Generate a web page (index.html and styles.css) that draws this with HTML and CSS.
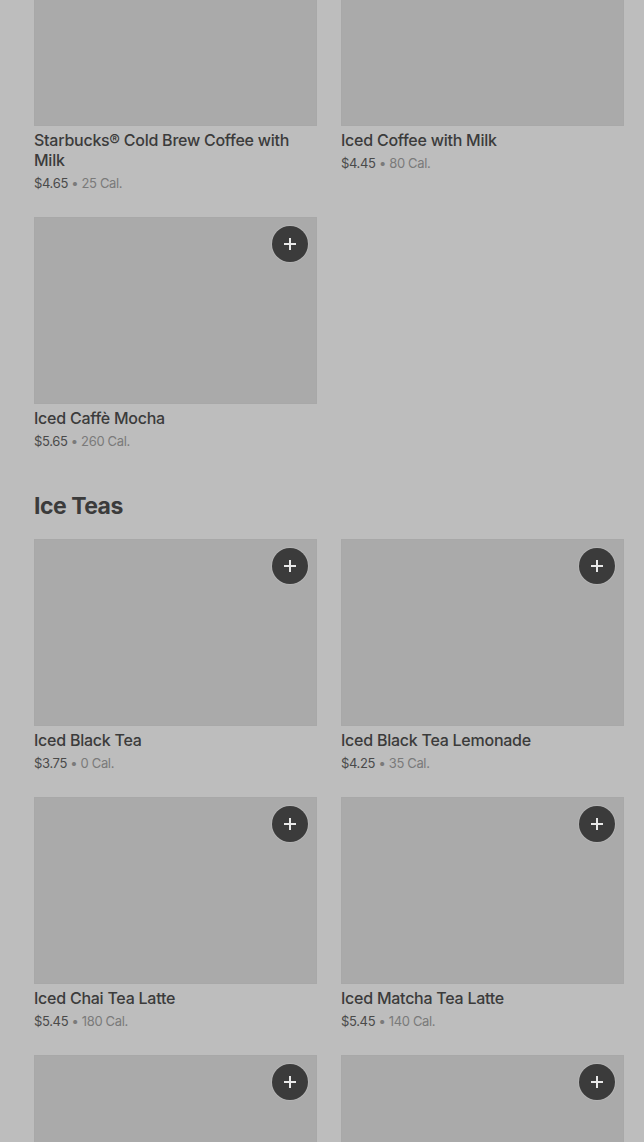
FILE: index.html
```html
<!DOCTYPE html>
<html>
<head>
    <title>Menu</title>
    <link rel="stylesheet" href="styles.css">
</head>
<body>
    <div class="menu">
        <div class="item-grid">
            <div class="item">
                <div class="item-photo"></div>
                <div class="item-name">Starbucks® Cold Brew Coffee with Milk</div>
                <div class="item-meta"><span class="price">$4.65</span> • 25 Cal.</div>
            </div>
            <div class="item">
                <div class="item-photo"></div>
                <div class="item-name">Iced Coffee with Milk</div>
                <div class="item-meta"><span class="price">$4.45</span> • 80 Cal.</div>
            </div>
            <div class="item">
                <div class="item-photo">
                    <button class="add-button"><svg viewBox="0 0 12 12" width="12" height="12"><path d="M6 0v12M0 6h12" stroke="#e8e8e8" stroke-width="2"/></svg></button>
                </div>
                <div class="item-name">Iced Caffè Mocha</div>
                <div class="item-meta"><span class="price">$5.65</span> • 260 Cal.</div>
            </div>
        </div>

        <h2 class="section-title">Ice Teas</h2>

        <div class="item-grid">
            <div class="item">
                <div class="item-photo">
                    <button class="add-button"><svg viewBox="0 0 12 12" width="12" height="12"><path d="M6 0v12M0 6h12" stroke="#e8e8e8" stroke-width="2"/></svg></button>
                </div>
                <div class="item-name">Iced Black Tea</div>
                <div class="item-meta"><span class="price">$3.75</span> • 0 Cal.</div>
            </div>
            <div class="item">
                <div class="item-photo">
                    <button class="add-button"><svg viewBox="0 0 12 12" width="12" height="12"><path d="M6 0v12M0 6h12" stroke="#e8e8e8" stroke-width="2"/></svg></button>
                </div>
                <div class="item-name">Iced Black Tea Lemonade</div>
                <div class="item-meta"><span class="price">$4.25</span> • 35 Cal.</div>
            </div>
            <div class="item">
                <div class="item-photo">
                    <button class="add-button"><svg viewBox="0 0 12 12" width="12" height="12"><path d="M6 0v12M0 6h12" stroke="#e8e8e8" stroke-width="2"/></svg></button>
                </div>
                <div class="item-name">Iced Chai Tea Latte</div>
                <div class="item-meta"><span class="price">$5.45</span> • 180 Cal.</div>
            </div>
            <div class="item">
                <div class="item-photo">
                    <button class="add-button"><svg viewBox="0 0 12 12" width="12" height="12"><path d="M6 0v12M0 6h12" stroke="#e8e8e8" stroke-width="2"/></svg></button>
                </div>
                <div class="item-name">Iced Matcha Tea Latte</div>
                <div class="item-meta"><span class="price">$5.45</span> • 140 Cal.</div>
            </div>
            <div class="item">
                <div class="item-photo">
                    <button class="add-button"><svg viewBox="0 0 12 12" width="12" height="12"><path d="M6 0v12M0 6h12" stroke="#e8e8e8" stroke-width="2"/></svg></button>
                </div>
            </div>
            <div class="item">
                <div class="item-photo">
                    <button class="add-button"><svg viewBox="0 0 12 12" width="12" height="12"><path d="M6 0v12M0 6h12" stroke="#e8e8e8" stroke-width="2"/></svg></button>
                </div>
            </div>
        </div>
    </div>
</body>
</html>
```

FILE: styles.css
```css
html, body {
    height: 100%;
    overflow: hidden;
}

body {
    margin: 0;
    background-color: #bdbdbd;
    font-family: Inter, "Noto Sans", sans-serif;
    color: #3b3b3b;
}

.menu {
    margin-top: -61px;
    padding: 0 20px 0 34px;
}

.item-grid {
    display: grid;
    grid-template-columns: 283px 283px;
    column-gap: 24px;
    row-gap: 24px;
    align-items: start;
}

.item-photo {
    position: relative;
    height: 187px;
    background-color: #aaaaaa;
    box-shadow: inset 0 0 0 1px #a8a8a8;
}

.add-button {
    position: absolute;
    top: 9px;
    right: 9px;
    display: flex;
    align-items: center;
    justify-content: center;
    width: 36px;
    height: 36px;
    padding: 0;
    border: none;
    border-radius: 50%;
    background-color: #3b3b3b;
    box-shadow: 0 0 0 1px rgba(255, 255, 255, 0.12);
}

.item-name {
    margin-top: 4px;
    font-size: 16px;
    font-weight: 500;
    line-height: 20px;
    letter-spacing: -0.25px;
    color: #3b3b3b;
}

.item-meta {
    margin-top: 3px;
    font-size: 13px;
    line-height: 20px;
    letter-spacing: -0.35px;
    color: #7a7a7a;
}

.item-meta .price {
    color: #4a4a4a;
}

.section-title {
    margin: 37px 0 15px;
    font-size: 23px;
    font-weight: 700;
    line-height: 36px;
    letter-spacing: -0.5px;
    color: #3b3b3b;
}
```
